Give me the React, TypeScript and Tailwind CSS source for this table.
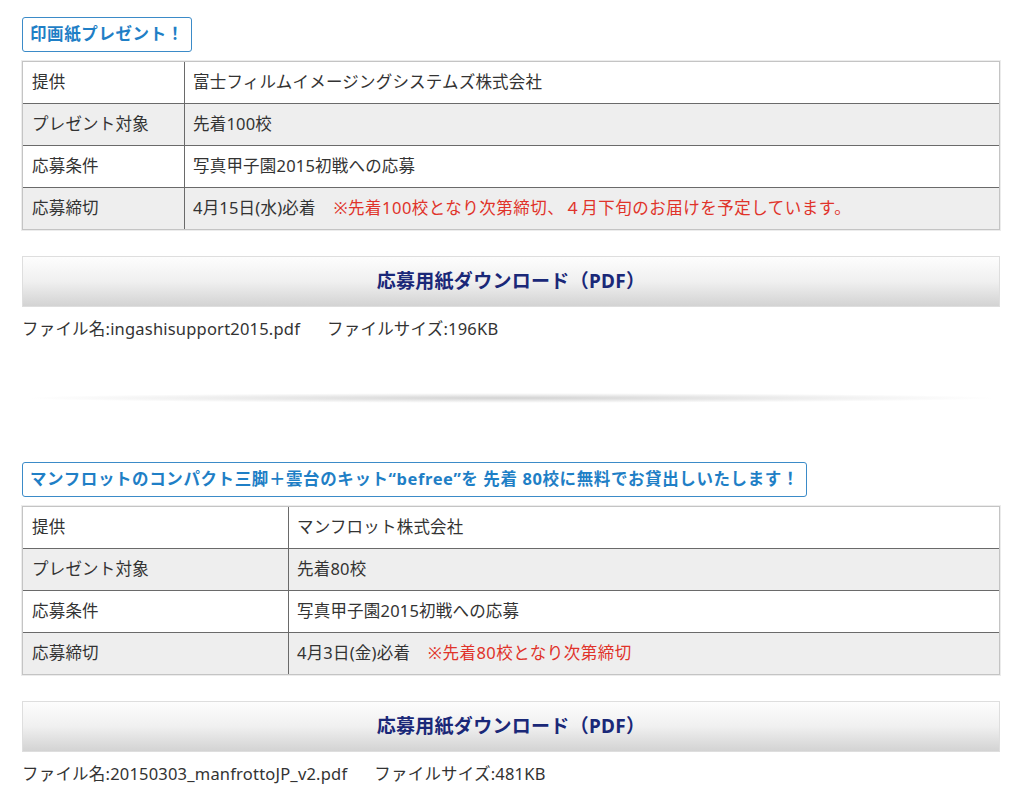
import React from 'react';

interface Row {
  label: string;
  value: string;
  note?: string;
}

interface Campaign {
  title: string;
  labelWidth: string;
  rows: Row[];
  fileName: string;
  fileSize: string;
}

const campaigns: Campaign[] = [
  {
    title: '印画紙プレゼント！',
    labelWidth: 'w-[162px]',
    rows: [
      { label: '提供', value: '富士フィルムイメージングシステムズ株式会社' },
      { label: 'プレゼント対象', value: '先着100校' },
      { label: '応募条件', value: '写真甲子園2015初戦への応募' },
      {
        label: '応募締切',
        value: '4月15日(水)必着',
        note: '※先着100校となり次第締切、４月下旬のお届けを予定しています。',
      },
    ],
    fileName: 'ingashisupport2015.pdf',
    fileSize: '196KB',
  },
  {
    title: 'マンフロットのコンパクト三脚＋雲台のキット“befree”を 先着 80校に無料でお貸出しいたします！',
    labelWidth: 'w-[266px]',
    rows: [
      { label: '提供', value: 'マンフロット株式会社' },
      { label: 'プレゼント対象', value: '先着80校' },
      { label: '応募条件', value: '写真甲子園2015初戦への応募' },
      { label: '応募締切', value: '4月3日(金)必着', note: '※先着80校となり次第締切' },
    ],
    fileName: '20150303_manfrottoJP_v2.pdf',
    fileSize: '481KB',
  },
];

const CampaignBlock: React.FC<{ c: Campaign }> = ({ c }) => (
  <section>
    <div className="inline-flex h-[35px] items-center rounded-[3px] border border-[#3b8bc8] px-[7px] text-[16.5px] font-bold text-[#1f7fc6] tracking-[0.6px]">
      {c.title}
    </div>

    {/* info table */}
    <div className="mt-[9px] border border-[#c4c4c4] shadow-[0_0_0_1px_#ececec]">
      {c.rows.map((row, i) => (
        <div
          key={row.label}
          className={`flex ${i > 0 ? 'h-[42px] border-t border-[#6a6a6a]' : 'h-[41px]'} ${i % 2 === 1 ? 'bg-[#eeeeee]' : 'bg-white'}`}
        >
          <div className={`${c.labelWidth} shrink-0 flex items-center pl-[9px] border-r border-[#6a6a6a]`}>
            {row.label}
          </div>
          <div className="flex items-center pl-[8px]">
            <span>{row.value}</span>
            {row.note && <span className="ml-[18px] tracking-[0.5px] text-[#e0332a]">{row.note}</span>}
          </div>
        </div>
      ))}
    </div>

    {/* download button */}
    <div className="mt-[26px] flex h-[51px] items-center justify-center border border-[#dedede] bg-gradient-to-b from-[#fdfdfd] via-[#f0f0f0] to-[#d3d3d3] text-[19px] font-bold tracking-[0.3px] text-[#1a2878]">
      応募用紙ダウンロード（PDF）
    </div>

    <p className="mt-[10px] leading-[24px]">
      ファイル名:{c.fileName}
      <span className="ml-[27px]">ファイルサイズ:{c.fileSize}</span>
    </p>
  </section>
);

export default function App() {
  return (
    <div
      className="min-h-[801px] w-[1024px] bg-white pl-[22px] pr-[24px] pt-[17px] text-[16.5px] tracking-[0.2px] text-[#333]"
      style={{ fontFamily: '"Noto Sans", "Noto Sans CJK JP", sans-serif' }}
    >
      <CampaignBlock c={campaigns[0]} />

      {/* divider */}
      <div className="mt-[52px] mb-[59px] h-[10px] bg-[radial-gradient(ellipse_at_center,#d2d2d2_0%,#ececec_40%,rgba(255,255,255,0)_70%)]" />

      <CampaignBlock c={campaigns[1]} />
    </div>
  );
}
